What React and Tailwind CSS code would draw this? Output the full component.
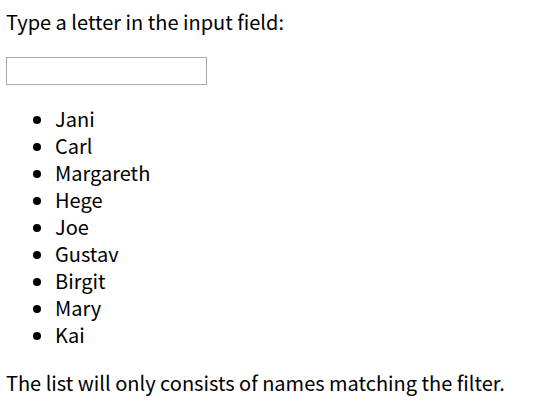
export default function App() {
  const names = ["Jani", "Carl", "Margareth", "Hege", "Joe", "Gustav", "Birgit", "Mary", "Kai"];
  return (
    <div className="min-h-screen bg-white px-[6px] pt-[8px] text-[20px] leading-[27px] text-black" style={{ fontFamily: '"Noto Sans CJK KR", "Noto Sans", sans-serif' }}>
      <p>Type a letter in the input field:</p>
      <input
        type="text"
        className="mt-[22px] block h-[28px] w-[201px] border border-[#a9a9a9] px-1 text-[16px] outline-none"
      />
      <ul className="mt-[20px] list-disc pl-[49px]">
        {names.map((n) => (
          <li key={n}>{n}</li>
        ))}
      </ul>
      <p className="mt-[21px]">The list will only consists of names matching the filter.</p>
    </div>
  );
}
